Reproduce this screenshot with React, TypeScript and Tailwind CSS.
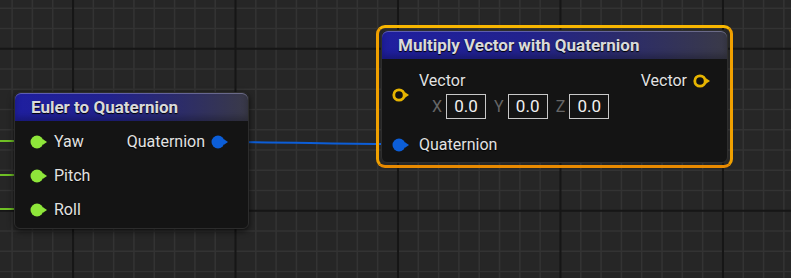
import React from "react";

const font = { fontFamily: "Roboto, 'Liberation Sans', sans-serif" };

function Grid() {
  const lines = [];
  for (let i = -1; i < 42; i++) {
    const x = 12.1 + i * 20.31;
    if ((i - 3) % 8 === 0) continue;
    lines.push(<line key={"v" + i} x1={x} y1={0} x2={x} y2={278} stroke="#333333" strokeWidth={1.6} />);
  }
  for (let j = -1; j < 16; j++) {
    const y = 8.2 + j * 20.25;
    if ((j - 2) % 8 === 0) continue;
    lines.push(<line key={"h" + j} x1={0} y1={y} x2={791} y2={y} stroke="#333333" strokeWidth={1.6} />);
  }
  // major lines on top
  for (let i = -1; i < 42; i++) {
    if ((i - 3) % 8 !== 0) continue;
    const x = 12.1 + i * 20.31;
    lines.push(<line key={"mv" + i} x1={x} y1={0} x2={x} y2={278} stroke="#161616" strokeWidth={2} />);
  }
  for (let j = -1; j < 16; j++) {
    if ((j - 2) % 8 !== 0) continue;
    const y = 8.2 + j * 20.25;
    lines.push(<line key={"mh" + j} x1={0} y1={y} x2={791} y2={y} stroke="#161616" strokeWidth={2} />);
  }
  return (
    <svg className="absolute inset-0" width={791} height={278}>
      {lines}
    </svg>
  );
}

function Pin({ color, ring = false }: { color: string; ring?: boolean }) {
  return (
    <svg width={18} height={14} viewBox="0 0 18 14" className="shrink-0 overflow-visible">
      {ring ? (
        <circle cx={7} cy={7} r={5.2} fill="#111" stroke={color} strokeWidth={2.8} />
      ) : (
        <circle cx={7} cy={7} r={6.5} fill={color} />
      )}
      <path d="M13 4.2 L17 7 L13 9.8 Z" fill={color} />
    </svg>
  );
}

function Header({ title }: { title: string }) {
  return (
    <div className="h-[28px] flex items-center pl-[16px] rounded-t-[6px] shadow-[inset_0_1px_0_rgba(170,170,210,0.45),inset_0_-4px_6px_rgba(0,0,0,0.25)] bg-[linear-gradient(90deg,#1f1fa0_0%,#22228e_40%,#2c2c6a_70%,#3a3a48_100%)]">
      <span className="text-[17px] font-bold text-[#dadada] leading-none [text-shadow:0_1px_1px_#000]">{title}</span>
    </div>
  );
}

function Row({ children }: { children: React.ReactNode }) {
  return <div className="flex items-center text-[16px] text-[#e2e2e2] [text-shadow:0_1px_1px_#000]">{children}</div>;
}

function VecBox({ axis }: { axis: string }) {
  return (
    <div className="flex items-center gap-[4px]">
      <span className="text-[16px] text-[#666666]">{axis}</span>
      <div className="w-[40px] h-[25px] border border-[#c8c8c8] flex items-center justify-center text-[17px] text-[#f0f0f0]">0.0</div>
    </div>
  );
}

export default function App() {
  return (
    <div className="relative w-[791px] h-[278px] overflow-hidden bg-[#262626]" style={font}>
      <Grid />
      <svg className="absolute inset-0" width={791} height={278}>
        <g stroke="#6fc025" strokeWidth={2}>
          <line x1={0} y1={141} x2={32} y2={141} />
          <line x1={0} y1={175} x2={32} y2={175} />
          <line x1={0} y1={209} x2={32} y2={209} />
        </g>
        <path d="M226 142 C 300 142, 320 144, 394 144" stroke="#0c5ed8" strokeWidth={2} fill="none" />
      </svg>

      {/* Euler to Quaternion */}
      <div className="absolute left-[14px] top-[92px] w-[235px] h-[137px] rounded-[6px] bg-[#141414] border border-[#2c2c2c] shadow-[0_2px_6px_rgba(0,0,0,0.7)] flex flex-col">
        <Header title="Euler to Quaternion" />
        <div className="flex flex-col pt-[4px] pl-[15px] pr-[19px]">
          <div className="h-[34px] flex items-center justify-between">
            <Row>
              <Pin color="#8ee63a" />
              <span className="ml-[6px]">Yaw</span>
            </Row>
            <Row>
              <span className="mr-[6px]">Quaternion</span>
              <Pin color="#0c5ed8" />
            </Row>
          </div>
          <div className="h-[34px] flex items-center">
            <Row>
              <Pin color="#8ee63a" />
              <span className="ml-[6px]">Pitch</span>
            </Row>
          </div>
          <div className="h-[34px] flex items-center">
            <Row>
              <Pin color="#8ee63a" />
              <span className="ml-[6px]">Roll</span>
            </Row>
          </div>
        </div>
      </div>

      {/* Multiply Vector with Quaternion */}
      <div className="absolute left-[376px] top-[25px] w-[357px] h-[143px] rounded-[9px] border-[3px] border-t-[#f7b600] border-x-[#f0a000] border-b-[#e98a00] p-[2px]">
        <div className="h-full rounded-[6px] bg-[#141414] border border-[#2e2e2e] flex flex-col">
          <Header title="Multiply Vector with Quaternion" />
          <div className="flex flex-col pl-[10px] pr-[16px] pt-[12px]">
            <div className="flex justify-between">
              <div className="flex items-center">
                <Pin color="#e6b400" ring />
                <div className="flex flex-col ml-[9px]">
                  <Row>
                    <span className="leading-[20px]">Vector</span>
                  </Row>
                  <div className="flex gap-[8px] mt-[3px] ml-[13px]">
                    <VecBox axis="X" />
                    <VecBox axis="Y" />
                    <VecBox axis="Z" />
                  </div>
                </div>
              </div>
              <Row>
                <span className="leading-[20px] mr-[6px] self-start">Vector</span>
                <div className="self-start mt-[3px]">
                  <Pin color="#e6b400" ring />
                </div>
              </Row>
            </div>
            <div className="mt-[14px]">
              <Row>
                <Pin color="#0c5ed8" />
                <span className="ml-[9px]">Quaternion</span>
              </Row>
            </div>
          </div>
        </div>
      </div>
    </div>
  );
}
